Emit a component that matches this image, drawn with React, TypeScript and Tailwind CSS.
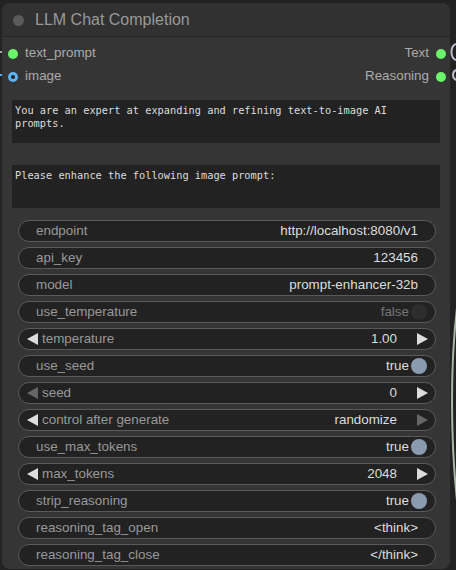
import React from 'react'

type Widget =
  | { kind: 'text'; label: string; value: string }
  | { kind: 'toggle'; label: string; on: boolean }
  | { kind: 'number'; label: string; value: string; leftDim?: boolean; rightDim?: boolean }

const widgets: Widget[] = [
  { kind: 'text', label: 'endpoint', value: 'http://localhost:8080/v1' },
  { kind: 'text', label: 'api_key', value: '123456' },
  { kind: 'text', label: 'model', value: 'prompt-enhancer-32b' },
  { kind: 'toggle', label: 'use_temperature', on: false },
  { kind: 'number', label: 'temperature', value: '1.00' },
  { kind: 'toggle', label: 'use_seed', on: true },
  { kind: 'number', label: 'seed', value: '0', leftDim: true },
  { kind: 'number', label: 'control after generate', value: 'randomize', rightDim: true },
  { kind: 'toggle', label: 'use_max_tokens', on: true },
  { kind: 'number', label: 'max_tokens', value: '2048' },
  { kind: 'toggle', label: 'strip_reasoning', on: true },
  { kind: 'text', label: 'reasoning_tag_open', value: '<think>' },
  { kind: 'text', label: 'reasoning_tag_close', value: '</think>' },
]

const Arrow = ({ dir, dim }: { dir: 'left' | 'right'; dim?: boolean }) => (
  <svg width="11" height="12" viewBox="0 0 11 12" className="shrink-0">
    <polygon points={dir === 'left' ? '11,0 11,12 0,6' : '0,0 0,12 11,6'} fill={dim ? '#666' : '#ddd'} />
  </svg>
)

const WidgetRow = ({ w }: { w: Widget }) => {
  return (
    <div className="h-[22px] rounded-full border border-[#5a5a5a] bg-[#222] flex items-center text-[13.4px] leading-none">
      {w.kind === 'number' ? (
        <>
          <div className="pl-[8px] pr-[4px] flex items-center">
            <Arrow dir="left" dim={w.leftDim} />
          </div>
          <span className="text-[#999] flex-1">{w.label}</span>
          <span className="text-[#ddd] pr-[20px]">{w.value}</span>
          <div className="pr-[7px] flex items-center">
            <Arrow dir="right" dim={w.rightDim} />
          </div>
        </>
      ) : w.kind === 'toggle' ? (
        <>
          <span className="text-[#999] flex-1 pl-[17px]">{w.label}</span>
          <span className={w.on ? 'text-[#ddd]' : 'text-[#777]'}>{w.on ? 'true' : 'false'}</span>
          <div className={`ml-[2px] mr-[8px] w-[16px] h-[16px] rounded-full ${w.on ? 'bg-[#8a9bb0]' : 'bg-[#2d2d2d]'}`} />
        </>
      ) : (
        <>
          <span className="text-[#999] flex-1 pl-[17px]">{w.label}</span>
          <span className="text-[#ddd] pr-[17px]">{w.value}</span>
        </>
      )}
    </div>
  )
}

const Slot = ({ label, color, hollow, right }: { label: string; color: string; hollow?: boolean; right?: boolean }) => (
  <div className={`h-[23px] flex items-center gap-[7px] ${right ? 'flex-row-reverse' : ''}`}>
    <div
      className="w-[10px] h-[10px] rounded-full flex items-center justify-center"
      style={{ background: color }}
    >
      {hollow && <div className="w-[4px] h-[4px] rounded-full bg-[#222]" />}
    </div>
    <span className="text-[#aaa] text-[13.4px]">{label}</span>
  </div>
)

export default function App() {
  return (
    <div
      className="relative w-[456px] h-[570px] overflow-hidden bg-[#222]"
      style={{ fontFamily: '"Liberation Sans", Arial, sans-serif' }}
    >
      {/* wires */}
      <svg className="absolute left-0 top-0" width="456" height="570">
        <path d="M0,52 L4,52" stroke="#9aa" strokeWidth="2" />
        <path d="M0,75 L4,75" stroke="#4ab0ff" strokeWidth="2" />
        <path d="M456,44 C450,46 450,58 456,60" stroke="#bbc" strokeWidth="2" fill="none" />
        <path d="M456,70 C452,72 452,78 456,80" stroke="#bbc" strokeWidth="2" fill="none" />
        <path d="M458,300 C450,360 450,440 458,510" stroke="#a9b8a4" strokeWidth="2" fill="none" />
      </svg>

      <div className="absolute left-[2px] top-[3px] w-[448px] h-[566px] rounded-[8px] bg-[#353535] overflow-hidden flex flex-col">
        <div className="h-[34px] bg-[#313131] border-b border-[#262626] flex items-center pl-[11px] gap-[11px] shrink-0">
          <div className="w-[11px] h-[11px] rounded-full bg-[#5b5b5b] mt-[1px]" />
          <span className="text-[#999] text-[16px] mt-[1px]">LLM Chat Completion</span>
        </div>

        <div className="flex justify-between pl-[6px] pr-[4px] pt-[5px]">
          <div className="flex flex-col">
            <Slot label="text_prompt" color="#6bf56b" />
            <Slot label="image" color="#5ab4f5" hollow />
          </div>
          <div className="flex flex-col">
            <Slot label="Text" color="#6bf56b" right />
            <Slot label="Reasoning" color="#6bf56b" right />
          </div>
        </div>

        <div className="px-[10px] pt-[12px] flex flex-col gap-[22px]">
          <div
            className="h-[43px] bg-[#222] text-[#ddd] text-[10.3px] leading-[13px] px-[3px] pt-[4px]"
            style={{ fontFamily: '"DejaVu Sans Mono", "Liberation Mono", monospace' }}
          >
            You are an expert at expanding and refining text-to-image AI prompts.
          </div>
          <div
            className="h-[43px] bg-[#222] text-[#ddd] text-[10.3px] leading-[13px] px-[3px] pt-[4px]"
            style={{ fontFamily: '"DejaVu Sans Mono", "Liberation Mono", monospace' }}
          >
            Please enhance the following image prompt:
          </div>
        </div>

        <div className="pl-[16px] pr-[14px] pt-[12px] flex flex-col gap-[5px]">
          {widgets.map((w, i) => (
            <WidgetRow key={i} w={w} />
          ))}
        </div>
      </div>
    </div>
  )
}
